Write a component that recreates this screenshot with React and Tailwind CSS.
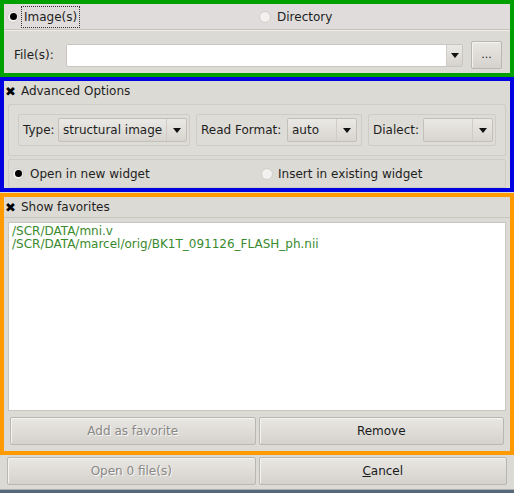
import React from "react";

function Radio({ checked }) {
  return (
    <span className="w-[12px] h-[12px] rounded-full flex items-center justify-center shrink-0 bg-[#f2f1ef] border border-[#d2cfca]">
      {checked && <span className="w-[7px] h-[7px] rounded-full bg-black" />}
    </span>
  );
}

function Check({ label }) {
  return (
    <div className="h-[20px] flex items-center gap-[5px] pl-[1px]">
      <span className="text-[13px] leading-none font-bold text-black">✖</span>
      <span>{label}</span>
    </div>
  );
}

function Arrow() {
  return (
    <svg width="8" height="5" viewBox="0 0 8 5" className="shrink-0">
      <path d="M0 0 L8 0 L4 5 Z" fill="#111" />
    </svg>
  );
}

function Combo({ value, className }) {
  return (
    <div
      className={
        "h-[24px] flex items-center rounded-[2px] border border-[#c3c0bb] bg-gradient-to-b from-[#ebe9e5] to-[#d8d5d0] " +
        className
      }
    >
      <span className="flex-1 pl-[4px] truncate">{value}</span>
      <span className="w-[20px] h-full flex items-center justify-center border-l border-[#cfccc7]">
        <Arrow />
      </span>
    </div>
  );
}

function Button({ children, disabled, className }) {
  return (
    <div
      className={
        "h-[28px] flex items-center justify-center rounded-[2px] border border-[#bab7b2] bg-gradient-to-b from-[#e9e7e3] to-[#d5d2cd] shadow-[inset_1px_1px_0_#f4f3f1] " +
        (disabled ? "text-[#8a8885] [text-shadow:1px_1px_0_#f7f7f7] " : "text-[#1a1a1a] ") +
        className
      }
    >
      {children}
    </div>
  );
}

export default function App() {
  return (
    <div className="w-[514px] h-[493px] bg-[#dcdad5] font-['DejaVu_Sans',sans-serif] text-[12px] text-[#1e1e1e] flex flex-col overflow-hidden">
      {/* green: source selection */}
      <div className="h-[77px] border-4 border-[#00a000] flex flex-col">
        <div className="h-[26px] flex bg-[#dfdcdb] border-b border-[#c6c3be]">
          <div className="w-[253px] flex items-center pl-[3px] gap-[2px]">
            <Radio checked />
            <span className="px-[2px] py-[1px] border border-dotted border-[#333]">Image(s)</span>
          </div>
          <div className="flex-1 flex items-center pl-[2px] gap-[6px]">
            <Radio />
            <span>Directory</span>
          </div>
        </div>
        <div className="flex-1 flex items-center border-t border-[#eeece9] pl-[10px] pr-[5px] pt-[6px]">
          <span className="w-[52px]">File(s):</span>
          <div className="h-[23px] w-[397px] flex items-center bg-white border border-[#c9c6c1] rounded-[2px]">
            <span className="flex-1" />
            <span className="w-[16px] h-full flex items-center justify-center bg-gradient-to-b from-[#ebe9e5] to-[#d6d3ce] border-l border-[#cfccc7]">
              <Arrow />
            </span>
          </div>
          <Button className="ml-[8px] w-[31px] h-[24px] text-[11px]">...</Button>
        </div>
      </div>

      {/* blue: advanced options */}
      <div className="h-[115px] border-4 border-[#0000e0] flex flex-col">
        <Check label="Advanced Options" />
        <div className="mx-[4px] mt-[3px] h-[52px] flex items-center gap-[6px] px-[9px] border border-[#cfccc7] bg-[#dedcd7] rounded-[2px]">
          <div className="w-[172px] h-[32px] flex items-center pl-[4px] pr-[2px] border border-[#cfccc7] rounded-[2px]">
            <span className="w-[35px]">Type:</span>
            <Combo value="structural image" className="flex-1" />
          </div>
          <div className="w-[166px] h-[32px] flex items-center pl-[4px] pr-[4px] border border-[#cfccc7] rounded-[2px]">
            <span className="w-[86px]">Read Format:</span>
            <Combo value="auto" className="flex-1" />
          </div>
          <div className="flex-1 h-[32px] flex items-center pl-[4px] pr-[2px] border border-[#cfccc7] rounded-[2px]">
            <span className="w-[50px]">Dialect:</span>
            <Combo value="" className="flex-1" />
          </div>
        </div>
        <div className="mx-[4px] mt-[3px] flex-1 flex border border-[#cfccc7] rounded-[2px]">
          <div className="w-[249px] flex items-center pl-[3px] gap-[6px]">
            <Radio checked />
            <span>Open in new widget</span>
          </div>
          <div className="flex-1 flex items-center pl-[3px] gap-[5px]">
            <Radio />
            <span>Insert in existing widget</span>
          </div>
        </div>
      </div>

      {/* orange: favorites */}
      <div className="mt-[1px] h-[262px] border-4 border-[#ff9a00] flex flex-col">
        <div className="border-b border-[#c9c6c1]">
          <Check label="Show favorites" />
        </div>
        <div className="mx-[4px] mt-[4px] flex-1 bg-white border border-[#c9c6c1] pt-[2px] pl-[3px] text-[#3a8a2e] leading-[13px]">
          <div>/SCR/DATA/mni.v</div>
          <div>/SCR/DATA/marcel/orig/BK1T_091126_FLASH_ph.nii</div>
        </div>
        <div className="h-[40px] flex items-center gap-[3px] px-[6px]">
          <Button disabled className="flex-1">Add as favorite</Button>
          <Button className="flex-1">Remove</Button>
        </div>
      </div>

      {/* dialog buttons */}
      <div className="h-[34px] flex items-start gap-[3px] px-[7px] pt-[2px]">
        <Button disabled className="flex-1 h-[27px]">Open 0 file(s)</Button>
        <Button className="flex-1 h-[27px]">
          <span>
            <span className="underline">C</span>ancel
          </span>
        </Button>
      </div>
      <div className="flex-1 border-t border-[#a9aeb4] bg-[#56687a]" />
    </div>
  );
}
